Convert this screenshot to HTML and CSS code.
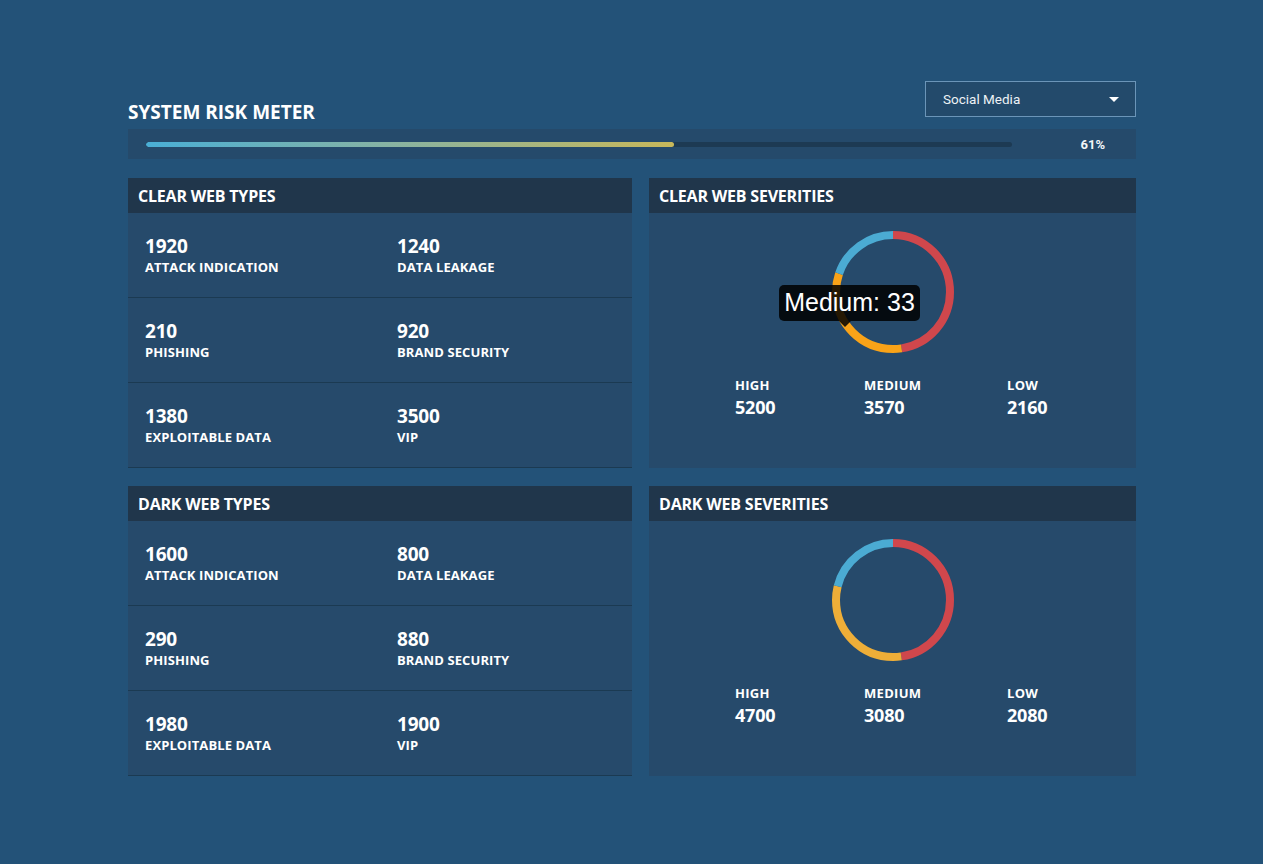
FILE: index.html
```html
<!DOCTYPE html>
<html>
<head>
<meta charset="utf-8">
<title>System Risk Meter</title>
<link rel="stylesheet" href="styles.css">
</head>
<body>
<div class="page">
  <div class="top">
    <h1 class="title">SYSTEM RISK METER</h1>
    <div class="select">
      <span>Social Media</span>
      <span class="caret"></span>
    </div>
  </div>
  <div class="meter">
    <div class="track"><div class="fill" style="width:61%"></div></div>
    <div class="pct">61%</div>
  </div>

  <div class="grid">
    <section class="card">
      <div class="card-head">CLEAR WEB TYPES</div>
      <div class="rows">
        <div class="row">
          <div class="stat"><div class="num">1920</div><div class="lbl">ATTACK INDICATION</div></div>
          <div class="stat"><div class="num">1240</div><div class="lbl">DATA LEAKAGE</div></div>
        </div>
        <div class="row">
          <div class="stat"><div class="num">210</div><div class="lbl">PHISHING</div></div>
          <div class="stat"><div class="num">920</div><div class="lbl">BRAND SECURITY</div></div>
        </div>
        <div class="row">
          <div class="stat"><div class="num">1380</div><div class="lbl">EXPLOITABLE DATA</div></div>
          <div class="stat"><div class="num">3500</div><div class="lbl">VIP</div></div>
        </div>
      </div>
    </section>

    <section class="card">
      <div class="card-head">CLEAR WEB SEVERITIES</div>
      <div class="sev">
        <svg class="donut" width="122" height="122" viewBox="0 0 122 122">
          <g transform="rotate(-90 61 61)">
            <circle cx="61" cy="61" r="57" fill="none" stroke="#d0474c" stroke-width="8" pathLength="100" stroke-dasharray="47.58 52.42" stroke-dashoffset="0"/>
            <circle cx="61" cy="61" r="57" fill="none" stroke="#f9a318" stroke-width="8" pathLength="100" stroke-dasharray="32.66 67.34" stroke-dashoffset="-47.58"/>
            <circle cx="61" cy="61" r="57" fill="none" stroke="#4babd3" stroke-width="8" pathLength="100" stroke-dasharray="19.76 80.24" stroke-dashoffset="-80.24"/>
          </g>
        </svg>
        <div class="legend">
          <div class="leg"><div class="leg-lbl">HIGH</div><div class="leg-num">5200</div></div>
          <div class="leg"><div class="leg-lbl">MEDIUM</div><div class="leg-num">3570</div></div>
          <div class="leg"><div class="leg-lbl">LOW</div><div class="leg-num">2160</div></div>
        </div>
        <div class="tooltip">Medium: 33</div>
      </div>
    </section>

    <section class="card">
      <div class="card-head">DARK WEB TYPES</div>
      <div class="rows">
        <div class="row">
          <div class="stat"><div class="num">1600</div><div class="lbl">ATTACK INDICATION</div></div>
          <div class="stat"><div class="num">800</div><div class="lbl">DATA LEAKAGE</div></div>
        </div>
        <div class="row">
          <div class="stat"><div class="num">290</div><div class="lbl">PHISHING</div></div>
          <div class="stat"><div class="num">880</div><div class="lbl">BRAND SECURITY</div></div>
        </div>
        <div class="row">
          <div class="stat"><div class="num">1980</div><div class="lbl">EXPLOITABLE DATA</div></div>
          <div class="stat"><div class="num">1900</div><div class="lbl">VIP</div></div>
        </div>
      </div>
    </section>

    <section class="card">
      <div class="card-head">DARK WEB SEVERITIES</div>
      <div class="sev">
        <svg class="donut" width="122" height="122" viewBox="0 0 122 122">
          <g transform="rotate(-90 61 61)">
            <circle cx="61" cy="61" r="57" fill="none" stroke="#d0474c" stroke-width="8" pathLength="100" stroke-dasharray="47.67 52.33" stroke-dashoffset="0"/>
            <circle cx="61" cy="61" r="57" fill="none" stroke="#eeae38" stroke-width="8" pathLength="100" stroke-dasharray="31.24 68.76" stroke-dashoffset="-47.67"/>
            <circle cx="61" cy="61" r="57" fill="none" stroke="#4babd3" stroke-width="8" pathLength="100" stroke-dasharray="21.09 78.91" stroke-dashoffset="-78.91"/>
          </g>
        </svg>
        <div class="legend">
          <div class="leg"><div class="leg-lbl">HIGH</div><div class="leg-num">4700</div></div>
          <div class="leg"><div class="leg-lbl">MEDIUM</div><div class="leg-num">3080</div></div>
          <div class="leg"><div class="leg-lbl">LOW</div><div class="leg-num">2080</div></div>
        </div>
      </div>
    </section>
  </div>
</div>
</body>
</html>
```

FILE: styles.css
```css
* { box-sizing: border-box; }
html, body {
  margin: 0;
  padding: 0;
  background: #235278;
  color: #fff;
  font-family: "Open Sans", "DejaVu Sans", sans-serif;
}
.page {
  width: 1008px;
  margin-left: 128px;
  padding-top: 81px;
}
.top {
  display: flex;
  justify-content: space-between;
  align-items: flex-start;
}
.title {
  margin: 19px 0 0;
  font-size: 19px;
  line-height: 24px;
  font-weight: 700;
  letter-spacing: 0;
}
.select {
  width: 211px;
  height: 36px;
  border: 1px solid #6b95b8;
  background: #234a6b;
  display: flex;
  align-items: center;
  justify-content: space-between;
  padding: 0 16px 0 17px;
  font-family: Roboto, "Liberation Sans", Arial, sans-serif;
  font-size: 13.5px;
  color: #eef2f6;
}
.caret {
  width: 0;
  height: 0;
  border-left: 5px solid transparent;
  border-right: 5px solid transparent;
  border-top: 5px solid #fff;
}
.meter {
  margin-top: 5px;
  height: 30px;
  background: #254a6b;
  display: flex;
  align-items: center;
  padding: 0 31px 0 18px;
}
.track {
  flex: 1;
  height: 5px;
  background: #1d3a53;
  border-radius: 3px;
  overflow: hidden;
}
.fill {
  height: 100%;
  border-radius: 3px;
  background: linear-gradient(90deg, #4aafd6 0%, #86b3a4 45%, #c8b85a 100%);
}
.pct {
  width: 93px;
  text-align: right;
  font-family: Roboto, "Liberation Sans", Arial, sans-serif;
  font-size: 13px;
  font-weight: 700;
  color: #f2f5f8;
}
.grid {
  margin-top: 19px;
  display: grid;
  grid-template-columns: 504px 487px;
  column-gap: 17px;
  row-gap: 18px;
}
.card {
  background: #264a6b;
  display: flex;
  flex-direction: column;
}
.card-head {
  height: 35px;
  background: #20364b;
  padding: 1px 0 0 10px;
  font-size: 16px;
  font-weight: 700;
  line-height: 34px;
  letter-spacing: -0.2px;
}
.row {
  height: 85px;
  display: grid;
  grid-template-columns: 252px 252px;
  padding: 22px 0 0 17px;
  border-bottom: 1px solid #1b3a52;
}
.num {
  font-size: 19px;
  line-height: 22px;
  font-weight: 700;
  letter-spacing: -0.2px;
}
.lbl {
  margin-top: 2px;
  font-size: 13px;
  line-height: 16px;
  font-weight: 700;
  letter-spacing: 0.1px;
}
.sev {
  position: relative;
  flex: 1;
  display: flex;
  flex-direction: column;
  align-items: center;
  padding-top: 18px;
}
.donut { display: block; }
.legend {
  align-self: stretch;
  margin-top: 24px;
  display: grid;
  grid-template-columns: 129px 143px auto;
  padding-left: 86px;
}
.leg-lbl {
  font-size: 13px;
  line-height: 16px;
  font-weight: 700;
  letter-spacing: 0.3px;
}
.leg-num {
  margin-top: 3px;
  font-size: 18px;
  line-height: 22px;
  font-weight: 700;
  letter-spacing: -0.2px;
}
.tooltip {
  position: absolute;
  left: 130px;
  top: 72px;
  width: 141px;
  height: 36px;
  background: rgba(0, 0, 0, 0.85);
  border-radius: 5px;
  font-family: "Liberation Sans", Arial, sans-serif;
  font-size: 25px;
  line-height: 35px;
  text-align: center;
  color: #fff;
}
.tooltip::after {
  content: "";
  position: absolute;
  left: 60px;
  top: 36px;
  border-left: 6px solid transparent;
  border-right: 6px solid transparent;
  border-top: 6px solid rgba(0, 0, 0, 0.85);
}
```
